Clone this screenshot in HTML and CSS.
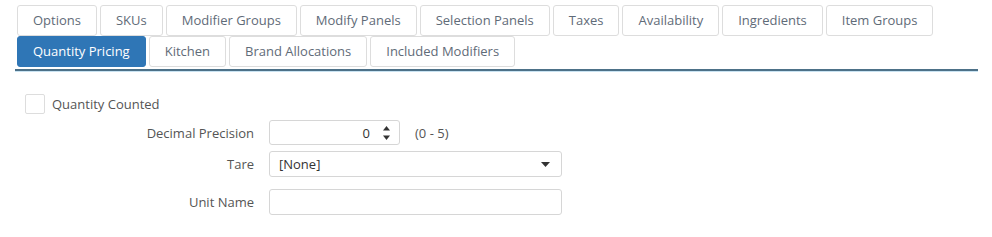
FILE: index.html
```html
<!DOCTYPE html>
<html>
<head>
    <title>Item Editor</title>
    <link rel="stylesheet" href="styles.css">
</head>
<body>
    <div class="tabs">
        <div class="tab-row">
            <div class="tab">Options</div>
            <div class="tab">SKUs</div>
            <div class="tab">Modifier Groups</div>
            <div class="tab">Modify Panels</div>
            <div class="tab">Selection Panels</div>
            <div class="tab">Taxes</div>
            <div class="tab">Availability</div>
            <div class="tab">Ingredients</div>
            <div class="tab">Item Groups</div>
        </div>
        <div class="tab-row">
            <div class="tab active">Quantity Pricing</div>
            <div class="tab">Kitchen</div>
            <div class="tab">Brand Allocations</div>
            <div class="tab">Included Modifiers</div>
        </div>
    </div>

    <div class="panel">
        <div class="check-row">
            <span class="checkbox"></span>
            <span>Quantity Counted</span>
        </div>
        <div class="field">
            <label>Decimal Precision</label>
            <div class="input number">
                <span class="value">0</span>
                <span class="spinner">
                    <svg width="9" height="16" viewBox="0 0 9 16">
                        <path d="M4.5 1 L8 5.5 H1 Z" fill="#333"/>
                        <path d="M4.5 15 L8 10.5 H1 Z" fill="#333"/>
                    </svg>
                </span>
            </div>
            <span class="hint">(0 - 5)</span>
        </div>
        <div class="field">
            <label>Tare</label>
            <div class="input wide select">
                <span>[None]</span>
                <svg width="9" height="5" viewBox="0 0 9 5"><path d="M0 0 H9 L4.5 5 Z" fill="#333"/></svg>
            </div>
        </div>
        <div class="field last">
            <label>Unit Name</label>
            <div class="input wide"></div>
        </div>
    </div>
</body>
</html>
```

FILE: styles.css
```css
body {
    margin: 0;
    background: #fff;
    font-family: "Open Sans", "Noto Sans", sans-serif;
    font-size: 13px;
    color: #444;
}

.tabs {
    margin: 0 14px 0 15px;
    padding: 5px 0 2px 2px;
    border-bottom: 2px solid #4d7188;
    box-shadow: 0 1px 0 #c9e3f2;
}

.tab-row {
    display: flex;
    gap: 3px;
}

.tab {
    height: 29px;
    line-height: 29px;
    padding: 0 15px;
    border: 1px solid #ddd;
    border-radius: 3px;
    color: #5f6b78;
    white-space: nowrap;
}

.tab.active {
    background: #2f76b6;
    border-color: #2f76b6;
    color: #fff;
}

.panel {
    padding: 23px 0 0 25px;
}

.check-row {
    display: flex;
    align-items: center;
    gap: 7px;
    height: 20px;
    color: #555;
}

.checkbox {
    width: 18px;
    height: 18px;
    border: 1px solid #ddd;
    border-radius: 2px;
}

.field {
    display: flex;
    align-items: center;
    margin-top: 6px;
}

.field.last {
    margin-top: 12px;
}

.field label {
    width: 229px;
    text-align: right;
    margin-right: 15px;
    color: #555;
}

.input {
    box-sizing: border-box;
    height: 25px;
    width: 131px;
    border: 1px solid #d6d6d6;
    border-radius: 3px;
    display: flex;
    align-items: center;
    padding: 0 9px;
    color: #333;
}

.input.wide {
    width: 293px;
    height: 26px;
}

.number {
    justify-content: flex-end;
}

.number .value {
    margin-right: 12px;
}

.spinner {
    display: flex;
    margin-right: -1px;
}

.select {
    justify-content: space-between;
    padding-right: 11px;
}

.hint {
    margin-left: 15px;
    color: #555;
}
```
